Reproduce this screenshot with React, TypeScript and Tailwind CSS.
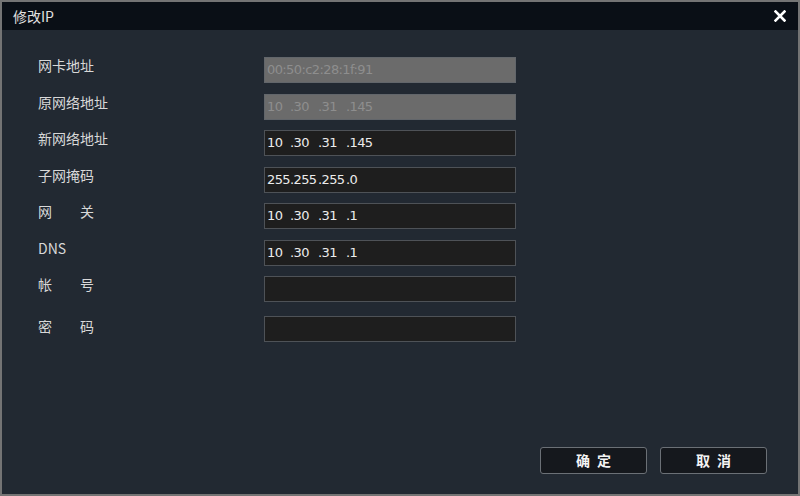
const rows: { label: string | [string, string]; value: string[]; disabled?: boolean }[] = [
  { label: "网卡地址", value: ["00:50:c2:28:1f:91"], disabled: true },
  { label: "原网络地址", value: ["10", ".30", ".31", ".145"], disabled: true },
  { label: "新网络地址", value: ["10", ".30", ".31", ".145"] },
  { label: "子网掩码", value: ["255", ".255", ".255", ".0"] },
  { label: ["网", "关"], value: ["10", ".30", ".31", ".1"] },
  { label: "DNS", value: ["10", ".30", ".31", ".1"] },
  { label: ["帐", "号"], value: [] },
];

const cjk = '"Noto Sans CJK SC", "DejaVu Sans", sans-serif';

function Label({ label }: { label: string | [string, string] }) {
  if (Array.isArray(label)) {
    return (
      <div className="flex w-[56px] justify-between h-[20px] leading-[20px]">
        <span>{label[0]}</span>
        <span>{label[1]}</span>
      </div>
    );
  }
  return <div className="h-[20px] leading-[20px]">{label}</div>;
}

// ip segments sit in fixed slots, like the device's ip box
const slotW = ["w-[23px]", "w-[28px]", "w-[28px]", ""];

function Field({ value, disabled }: { value: string[]; disabled?: boolean }) {
  return (
    <div
      className={
        "w-[252px] h-[26px] pl-[2px] flex items-center whitespace-pre text-[13px] tracking-[-0.6px] border " +
        (disabled
          ? "bg-[#6b6b6b] border-[#62666b] text-[#8e8e8e]"
          : "bg-[#1e1e1e] border-[#4e5257] text-[#ececec]")
      }
      style={{ fontFamily: '"DejaVu Sans", sans-serif' }}
    >
      {value.length === 1
        ? value[0]
        : value.map((s, i) => (
            <span key={i} className={slotW[i]}>
              {s}
            </span>
          ))}
    </div>
  );
}

export default function App() {
  return (
    <div
      className="w-[800px] h-[496px] border-2 border-[#747474] bg-[#222932] flex flex-col text-[#dcdcdc]"
      style={{ fontFamily: cjk }}
    >
      {/* title bar */}
      <div className="h-[28px] bg-[#0a0f16] flex items-center justify-between pl-[11px] pr-[12px]">
        <span className="text-[14px] text-[#e0e0e0]">修改IP</span>
        <svg width="12" height="12" viewBox="0 0 12 12">
          <path d="M1.5 1.5 L10.5 10.5 M10.5 1.5 L1.5 10.5" stroke="#ffffff" strokeWidth="2.6" strokeLinecap="square" />
        </svg>
      </div>

      {/* form */}
      <div className="flex-1 flex flex-col pl-[36px] pt-[27px]">
        <div className="flex flex-col gap-[10.5px]">
          {rows.map((r, i) => (
            <div key={i} className="flex items-start">
              <div className="w-[226px] text-[14px] text-[#d8d8d8] -mt-[2px]">
                <Label label={r.label} />
              </div>
              <Field value={r.value} disabled={r.disabled} />
            </div>
          ))}
        </div>
        <div className="flex items-start mt-[14px]">
          <div className="w-[226px] text-[14px] text-[#d8d8d8]">
            <Label label={["密", "码"]} />
          </div>
          <Field value={[]} />
        </div>

        <div className="mt-auto mb-[20px] mr-[31px] flex justify-end gap-[13px]">
          <button className="w-[107px] h-[27px] rounded-[3px] border border-[#6b7076] bg-[#15181d] text-[14px] text-[#f4f4f4] font-bold tracking-[7px] pl-[7px]">
            确定
          </button>
          <button className="w-[107px] h-[27px] rounded-[3px] border border-[#6b7076] bg-[#15181d] text-[14px] text-[#f4f4f4] font-bold tracking-[7px] pl-[7px]">
            取消
          </button>
        </div>
      </div>
    </div>
  );
}
